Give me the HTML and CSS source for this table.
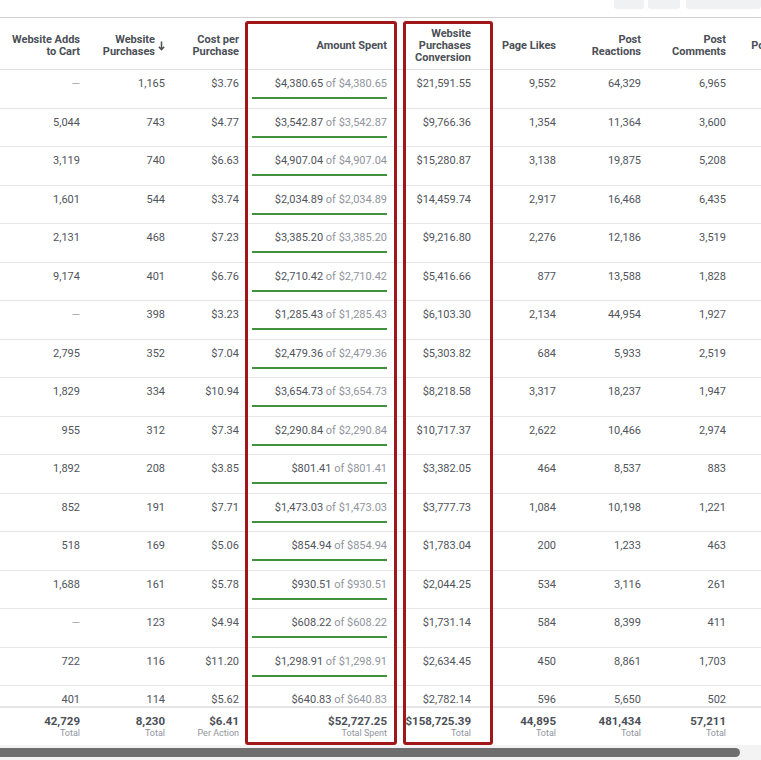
FILE: index.html
```html
<!DOCTYPE html>
<html>
<head>
<meta charset="utf-8">
<link rel="stylesheet" href="styles.css">
</head>
<body>
<div class="page">
  <div class="toolbar">
    <span class="tbtn b1"></span>
    <span class="tbtn b2"></span>
    <span class="tbtn b3"></span>
  </div>
  <div class="table">
    <div class="row head">
      <div class="cell">Website Adds<br>to Cart</div>
      <div class="cell sort"><span>Website<br>Purchases</span><svg class="arrow" width="7" height="10" viewBox="0 0 7 10"><path d="M3.5 0.5V8.5M0.8 5.8L3.5 8.6L6.2 5.8" fill="none" stroke="#4b4f56" stroke-width="1.5"/></svg></div>
      <div class="cell">Cost per<br>Purchase</div>
      <div class="cell">Amount Spent</div>
      <div class="cell">Website<br>Purchases<br>Conversion</div>
      <div class="cell">Page Likes</div>
      <div class="cell">Post<br>Reactions</div>
      <div class="cell">Post<br>Comments</div>
      <div class="cell c9">Post Shares</div>
    </div>
    <div class="body" id="body"></div>
    <div class="row foot">
      <div class="cell"><b>42,729</b><small>Total</small></div>
      <div class="cell"><b>8,230</b><small>Total</small></div>
      <div class="cell"><b>$6.41</b><small>Per Action</small></div>
      <div class="cell"><b>$52,727.25</b><small>Total Spent</small></div>
      <div class="cell"><b>$158,725.39</b><small>Total</small></div>
      <div class="cell"><b>44,895</b><small>Total</small></div>
      <div class="cell"><b>481,434</b><small>Total</small></div>
      <div class="cell"><b>57,211</b><small>Total</small></div>
      <div class="cell"></div>
    </div>
    <div class="scrollbar"><div class="thumb"></div></div>
    <div class="mark m1"></div>
    <div class="mark m2"></div>
  </div>
</div>
<script>
var data = [
["—","1,165","$3.76","$4,380.65","$21,591.55","9,552","64,329","6,965"],
["5,044","743","$4.77","$3,542.87","$9,766.36","1,354","11,364","3,600"],
["3,119","740","$6.63","$4,907.04","$15,280.87","3,138","19,875","5,208"],
["1,601","544","$3.74","$2,034.89","$14,459.74","2,917","16,468","6,435"],
["2,131","468","$7.23","$3,385.20","$9,216.80","2,276","12,186","3,519"],
["9,174","401","$6.76","$2,710.42","$5,416.66","877","13,588","1,828"],
["—","398","$3.23","$1,285.43","$6,103.30","2,134","44,954","1,927"],
["2,795","352","$7.04","$2,479.36","$5,303.82","684","5,933","2,519"],
["1,829","334","$10.94","$3,654.73","$8,218.58","3,317","18,237","1,947"],
["955","312","$7.34","$2,290.84","$10,717.37","2,622","10,466","2,974"],
["1,892","208","$3.85","$801.41","$3,382.05","464","8,537","883"],
["852","191","$7.71","$1,473.03","$3,777.73","1,084","10,198","1,221"],
["518","169","$5.06","$854.94","$1,783.04","200","1,233","463"],
["1,688","161","$5.78","$930.51","$2,044.25","534","3,116","261"],
["—","123","$4.94","$608.22","$1,731.14","584","8,399","411"],
["722","116","$11.20","$1,298.91","$2,634.45","450","8,861","1,703"],
["401","114","$5.62","$640.83","$2,782.14","596","5,650","502"]
];
var body = document.getElementById("body");
data.forEach(function(r){
  var row = document.createElement("div");
  row.className = "row data";
  r.forEach(function(v, i){
    var c = document.createElement("div");
    c.className = "cell";
    if (i === 3) {
      c.innerHTML = '<span>' + v + ' <span class="of">of ' + v + '</span></span><div class="bar"></div>';
      c.className = "cell spent";
    } else if (v === "—") {
      c.innerHTML = '<span class="dash">—</span>';
    } else {
      c.textContent = v;
    }
    row.appendChild(c);
  });
  var e = document.createElement("div");
  e.className = "cell";
  row.appendChild(e);
  body.appendChild(row);
});
</script>
</body>
</html>
```

FILE: styles.css
```css
html, body {
  margin: 0;
  padding: 0;
  background: #ffffff;
}
.page {
  width: 761px;
  height: 760px;
  overflow: hidden;
  font-family: Roboto, "Liberation Sans", Arial, sans-serif;
  color: #4b4f56;
}
.toolbar {
  height: 17px;
  display: flex;
  justify-content: flex-end;
  align-items: flex-start;
  gap: 4px;
}
.tbtn {
  display: block;
  height: 9px;
  background: #f0f1f3;
  border-radius: 0 0 3px 3px;
}
.b1 { width: 30px; }
.b2 { width: 32px; margin-right: 2px; }
.b3 { width: 75px; }
.table {
  position: relative;
  width: 819px;
  border-top: 1px solid #cfd1d4;
}
.row {
  display: grid;
  grid-template-columns: 88px 85px 74px 148px 84px 85px 85px 85px 85px;
}
.cell {
  text-align: right;
  padding-right: 8px;
  box-sizing: border-box;
}
.head {
  height: 52px;
  border-bottom: 1px solid #dddfe2;
  box-sizing: border-box;
}
.head .cell {
  font-size: 11px;
  font-weight: 700;
  line-height: 12px;
  padding-top: 4px;
  display: flex;
  align-items: center;
  justify-content: flex-end;
}
.head .sort {
  gap: 3px;
}
.arrow {
  margin-top: 0px;
}
.body {
  height: 636px;
  overflow: hidden;
}
.data {
  height: 38.5px;
  border-bottom: 1px solid #e4e6e9;
  box-sizing: border-box;
}
.data .cell {
  font-size: 11px;
  line-height: 14px;
  padding-top: 7px;
  color: #50545b;
}
.dash {
  color: #a7a9ad;
}
.spent {
  padding-left: 5px;
}
.of {
  color: #90949c;
}
.bar {
  height: 2px;
  margin-top: 6px;
  background: #42913c;
}
.foot {
  height: 39px;
  border-top: 2px solid #e4e6e9;
  box-sizing: border-box;
}
.foot .cell {
  padding-top: 6px;
  display: flex;
  flex-direction: column;
  align-items: flex-end;
}
.foot b {
  font-size: 11.5px;
  line-height: 14px;
  font-weight: 700;
  color: #4b4f56;
}
.foot small {
  font-size: 9px;
  line-height: 11px;
  color: #90949c;
}
.scrollbar {
  width: 761px;
  height: 15px;
  background: #f3f3f3;
  padding-top: 3px;
  box-sizing: border-box;
}
.thumb {
  width: 740px;
  height: 9px;
  background: #6e6e6e;
  border-radius: 0 5px 5px 0;
}
.mark {
  position: absolute;
  top: 3px;
  height: 724px;
  border: 3px solid #a11719;
  border-radius: 3px;
  box-sizing: border-box;
}
.m1 {
  left: 245px;
  width: 152px;
}
.m2 {
  left: 403px;
  width: 90px;
}
```
